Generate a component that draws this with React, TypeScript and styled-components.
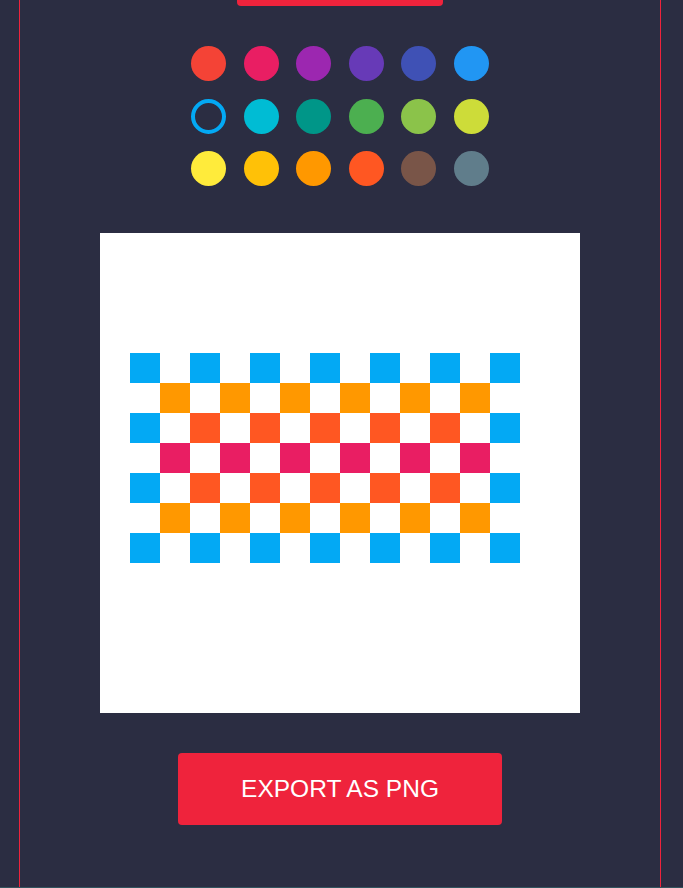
import React from "react";
import styled, { createGlobalStyle } from "styled-components";

const GlobalStyle = createGlobalStyle`
  html, body {
    margin: 0;
    padding: 0;
    background: #2b2d42;
    font-family: "Liberation Sans", Arial, sans-serif;
  }
`;

const Page = styled.div`
  height: 888px;
  box-sizing: border-box;
  border-bottom: 1px solid #33545e;
  overflow: hidden;
`;

const Panel = styled.main`
  box-sizing: border-box;
  width: 642px;
  height: 887px;
  margin-left: 19px;
  border-left: 1px solid #ef233c;
  border-right: 1px solid #ef233c;
  display: flex;
  flex-direction: column;
  align-items: center;
`;

const RedButton = styled.button<{ $w: number; $h: number }>`
  width: ${(p) => p.$w}px;
  height: ${(p) => p.$h}px;
  border: none;
  border-radius: 4px;
  background: #ef233c;
  color: #ffffff;
  font-family: "Liberation Sans", Arial, sans-serif;
  font-size: 24.5px;
  cursor: pointer;
  padding: 0;
`;

const TopButton = styled(RedButton)`
  margin-top: -66px;
`;

const Palette = styled.div`
  margin-top: 40px;
  display: grid;
  grid-template-columns: repeat(6, 35px);
  column-gap: 17.5px;
  row-gap: 17.5px;
`;

const Swatch = styled.div<{ $color: string; $selected?: boolean }>`
  width: 35px;
  height: 35px;
  box-sizing: border-box;
  border-radius: 50%;
  background: ${(p) => (p.$selected ? "transparent" : p.$color)};
  border: ${(p) => (p.$selected ? `4px solid ${p.$color}` : "none")};
  cursor: pointer;
`;

const Canvas = styled.div`
  margin-top: 47px;
  width: 480px;
  height: 480px;
  background: #ffffff;
  display: grid;
  grid-template-columns: repeat(16, 30px);
  grid-template-rows: repeat(16, 30px);
`;

const Pixel = styled.div<{ $color: string }>`
  background: ${(p) => p.$color};
`;

const ExportButton = styled(RedButton)`
  margin-top: 40px;
`;

const colors = [
  "#f44336", "#e91e63", "#9c27b0", "#673ab7", "#3f51b5", "#2196f3",
  "#03a9f4", "#00bcd4", "#009688", "#4caf50", "#8bc34a", "#cddc39",
  "#ffeb3b", "#ffc107", "#ff9800", "#ff5722", "#795548", "#607d8b",
];

const BLUE = "#03a9f4";
const ORANGE = "#ff9800";
const DEEP = "#ff5722";
const PINK = "#e91e63";

function pixelColor(row: number, col: number): string {
  const r = row - 4;
  const c = col - 1;
  if (r < 0 || r > 6 || c < 0 || c > 12) return "transparent";
  const even = c % 2 === 0;
  if (r === 0 || r === 6) return even ? BLUE : "transparent";
  if (r === 1 || r === 5) return even ? "transparent" : ORANGE;
  if (r === 2 || r === 4) {
    if (c === 0 || c === 12) return BLUE;
    return even ? DEEP : "transparent";
  }
  return even ? "transparent" : PINK;
}

const pixels: string[] = [];
for (let y = 0; y < 16; y++) {
  for (let x = 0; x < 16; x++) {
    pixels.push(pixelColor(y, x));
  }
}

export default function App() {
  return (
    <>
      <GlobalStyle />
      <Page>
        <Panel>
          <TopButton $w={206} $h={72} aria-label="Clear" />
          <Palette>
            {colors.map((c, i) => (
              <Swatch key={i} $color={c} $selected={i === 6} />
            ))}
          </Palette>
          <Canvas>
            {pixels.map((c, i) => (
              <Pixel key={i} $color={c} />
            ))}
          </Canvas>
          <ExportButton $w={324} $h={72}>EXPORT AS PNG</ExportButton>
        </Panel>
      </Page>
    </>
  );
}
